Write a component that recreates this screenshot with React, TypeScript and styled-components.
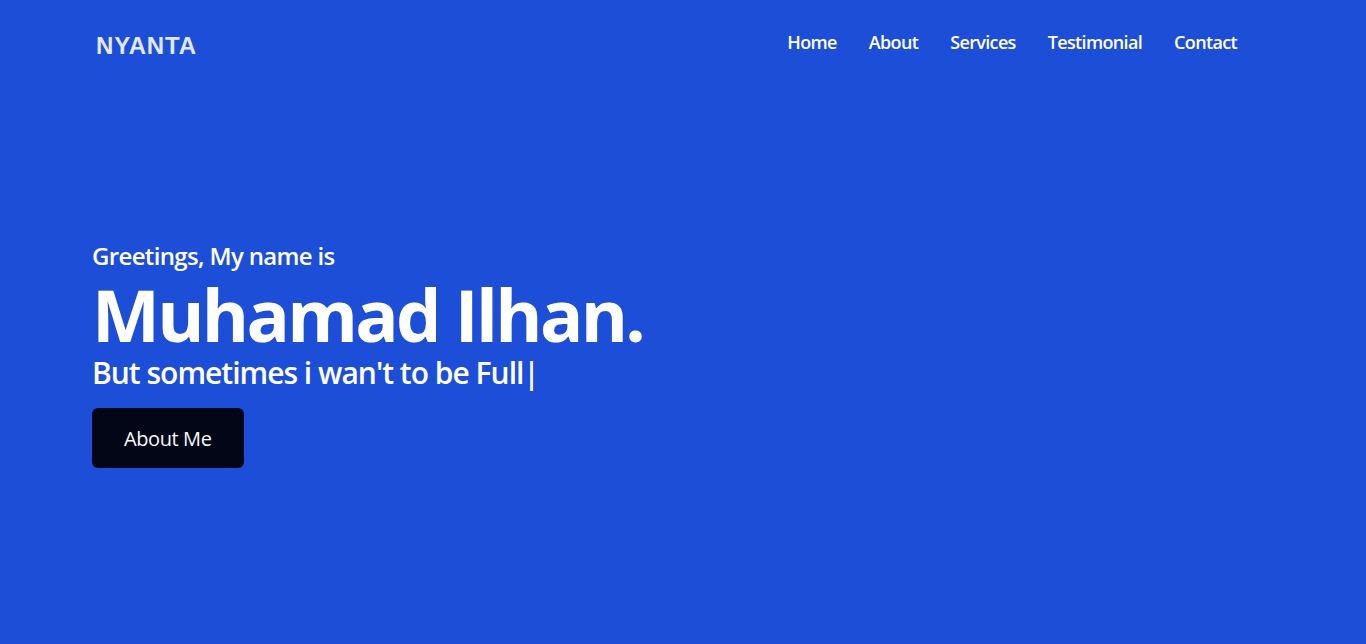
import styled, { createGlobalStyle } from "styled-components"

const GlobalStyle = createGlobalStyle`
  * {
    box-sizing: border-box;
    margin: 0;
    padding: 0;
  }
  body {
    background: #1d4ed8;
    font-family: "Open Sans", "Noto Sans", sans-serif;
    color: #ffffff;
  }
`

const links = ["Home", "About", "Services", "Testimonial", "Contact"]

export default function App() {
  return <Page>
    <GlobalStyle />
    <Navbar>
      <Logo>NYANTA</Logo>
      <NavLinks>
        {
          links.map(link => <NavLink key={link} href={`#${link.toLowerCase()}`}>{link}</NavLink>)
        }
      </NavLinks>
    </Navbar>

    <Hero id="home">
      <Greeting>Greetings, My name is</Greeting>
      <Name>Muhamad Ilhan.</Name>
      <Tagline>But sometimes i wan't to be Full|</Tagline>
      <Button>About Me</Button>
    </Hero>

    <Section id="about" />
    <Section id="services" />
    <Section id="testimonial" />
    <Section id="contact" />
  </Page>
}

const Page = styled.div`
  min-height: 100vh;
  background: #1d4ed8;
`

const Navbar = styled.nav`
  display: flex;
  align-items: center;
  justify-content: space-between;
  height: 88px;
  padding: 0 129px 0 96px;
`

const Logo = styled.span`
  font-family: "Liberation Sans", Arial, sans-serif;
  font-size: 24px;
  font-weight: 700;
  letter-spacing: 0.8px;
  color: #e2e8f0;
  margin-top: 4px;
`

const NavLinks = styled.div`
  display: flex;
  gap: 32px;
  margin-bottom: 4px;
`

const NavLink = styled.a`
  font-size: 18px;
  font-weight: 600;
  letter-spacing: -0.65px;
  color: #ffffff;
  text-decoration: none;
`

const Hero = styled.section`
  display: flex;
  flex-direction: column;
  align-items: flex-start;
  padding: 152px 92px 0;
  height: 556px;
`

const Greeting = styled.h3`
  font-size: 24px;
  font-weight: 600;
  letter-spacing: -0.65px;
  line-height: 32px;
`

const Name = styled.h1`
  font-size: 72px;
  font-weight: 700;
  letter-spacing: -2.7px;
  line-height: 84px;
`

const Tagline = styled.h2`
  font-size: 30px;
  font-weight: 600;
  letter-spacing: -1px;
  line-height: 34px;
`

const Button = styled.button`
  margin-top: 18px;
  padding: 0 32px;
  height: 60px;
  border: none;
  border-radius: 6px;
  background: #020617;
  color: #f8fafc;
  font-family: inherit;
  font-size: 20px;
  letter-spacing: -0.4px;
  cursor: pointer;
`

const Section = styled.section`
  height: 960px;
`
